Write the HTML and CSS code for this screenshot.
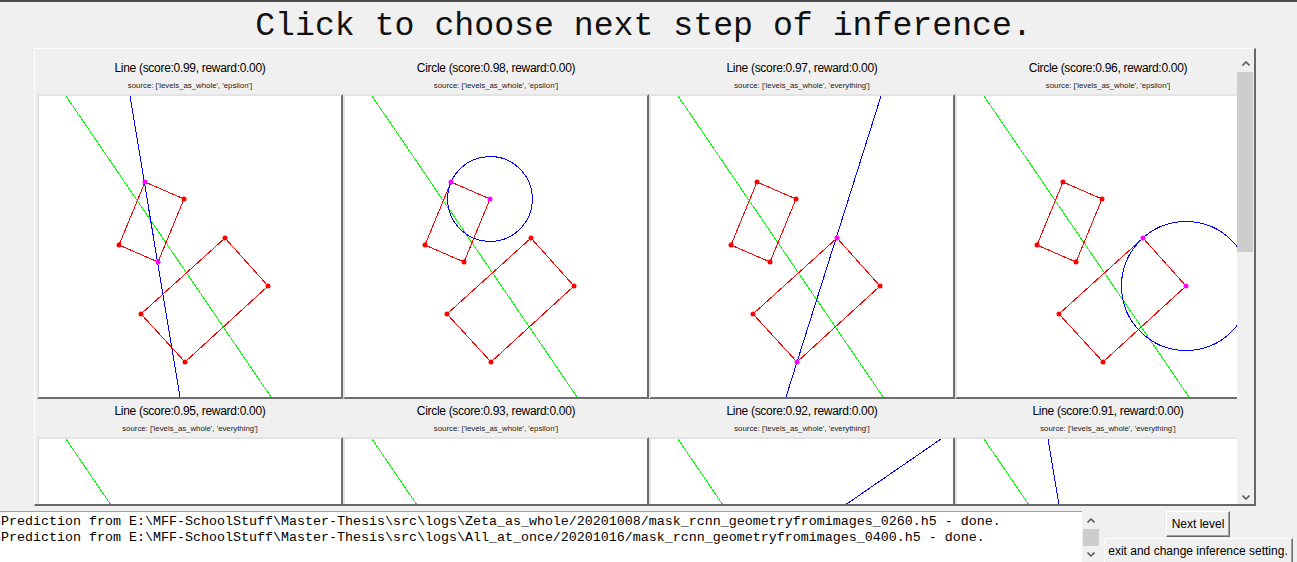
FILE: index.html
```html
<!DOCTYPE html>
<html>
<head>
<meta charset="utf-8">
<title>Inference</title>
<link rel="stylesheet" href="styles.css">
</head>
<body>
<div class="topbar"></div>
<h1 class="title">Click to choose next step of inference.</h1>
<div class="frame">
  <div class="viewport">
    <div class="grid">
      <div class="card">
        <div class="card-head"><div class="card-title">Line (score:0.99, reward:0.00)</div><div class="card-src">source: ['levels_as_whole', 'epsilon']</div></div>
        <div class="canvas"><svg viewBox="0 0 302 301">
          <line class="g" x1="27" y1="0" x2="232" y2="301"/>
          <polygon class="r" points="106,86 145,103 119,166 80,149"/>
          <polygon class="r" points="186,142 229,190 146,266 102,218"/>
          <line class="b" x1="91" y1="0" x2="141" y2="301"/>
          <circle class="dr" cx="145" cy="103" r="2.5"/><circle class="dr" cx="80" cy="149" r="2.5"/>
          <circle class="dr" cx="186" cy="142" r="2.5"/><circle class="dr" cx="229" cy="190" r="2.5"/><circle class="dr" cx="146" cy="266" r="2.5"/><circle class="dr" cx="102" cy="218" r="2.5"/>
          <circle class="dm" cx="106" cy="86" r="2.5"/><circle class="dm" cx="119" cy="166" r="2.5"/>
        </svg></div>
      </div>
      <div class="card">
        <div class="card-head"><div class="card-title">Circle (score:0.98, reward:0.00)</div><div class="card-src">source: ['levels_as_whole', 'epsilon']</div></div>
        <div class="canvas"><svg viewBox="0 0 302 301">
          <line class="g" x1="27" y1="0" x2="232" y2="301"/>
          <polygon class="r" points="106,86 145,103 119,166 80,149"/>
          <polygon class="r" points="186,142 229,190 146,266 102,218"/>
          <circle class="b" cx="145" cy="103" r="42.5"/>
          <circle class="dr" cx="119" cy="166" r="2.5"/><circle class="dr" cx="80" cy="149" r="2.5"/>
          <circle class="dr" cx="186" cy="142" r="2.5"/><circle class="dr" cx="229" cy="190" r="2.5"/><circle class="dr" cx="146" cy="266" r="2.5"/><circle class="dr" cx="102" cy="218" r="2.5"/>
          <circle class="dm" cx="106" cy="86" r="2.5"/><circle class="dm" cx="145" cy="103" r="2.5"/>
        </svg></div>
      </div>
      <div class="card">
        <div class="card-head"><div class="card-title">Line (score:0.97, reward:0.00)</div><div class="card-src">source: ['levels_as_whole', 'everything']</div></div>
        <div class="canvas"><svg viewBox="0 0 302 301">
          <line class="g" x1="27" y1="0" x2="232" y2="301"/>
          <polygon class="r" points="106,86 145,103 119,166 80,149"/>
          <polygon class="r" points="186,142 229,190 146,266 102,218"/>
          <line class="b" x1="230" y1="0" x2="135" y2="301"/>
          <circle class="dr" cx="106" cy="86" r="2.5"/><circle class="dr" cx="145" cy="103" r="2.5"/><circle class="dr" cx="119" cy="166" r="2.5"/><circle class="dr" cx="80" cy="149" r="2.5"/>
          <circle class="dr" cx="229" cy="190" r="2.5"/><circle class="dr" cx="102" cy="218" r="2.5"/>
          <circle class="dm" cx="186" cy="142" r="2.5"/><circle class="dm" cx="146" cy="266" r="2.5"/>
        </svg></div>
      </div>
      <div class="card">
        <div class="card-head"><div class="card-title">Circle (score:0.96, reward:0.00)</div><div class="card-src">source: ['levels_as_whole', 'epsilon']</div></div>
        <div class="canvas"><svg viewBox="0 0 302 301">
          <line class="g" x1="27" y1="0" x2="232" y2="301"/>
          <polygon class="r" points="106,86 145,103 119,166 80,149"/>
          <polygon class="r" points="186,142 229,190 146,266 102,218"/>
          <circle class="b" cx="229" cy="190" r="64.5"/>
          <circle class="dr" cx="106" cy="86" r="2.5"/><circle class="dr" cx="145" cy="103" r="2.5"/><circle class="dr" cx="119" cy="166" r="2.5"/><circle class="dr" cx="80" cy="149" r="2.5"/>
          <circle class="dr" cx="146" cy="266" r="2.5"/><circle class="dr" cx="102" cy="218" r="2.5"/>
          <circle class="dm" cx="186" cy="142" r="2.5"/><circle class="dm" cx="229" cy="190" r="2.5"/>
        </svg></div>
      </div>
      <div class="card">
        <div class="card-head"><div class="card-title">Line (score:0.95, reward:0.00)</div><div class="card-src">source: ['levels_as_whole', 'everything']</div></div>
        <div class="canvas"><svg viewBox="0 0 302 301">
          <line class="g" x1="27" y1="0" x2="232" y2="301"/>
          <polygon class="r" points="106,86 145,103 119,166 80,149"/>
          <polygon class="r" points="186,142 229,190 146,266 102,218"/>
        </svg></div>
      </div>
      <div class="card">
        <div class="card-head"><div class="card-title">Circle (score:0.93, reward:0.00)</div><div class="card-src">source: ['levels_as_whole', 'epsilon']</div></div>
        <div class="canvas"><svg viewBox="0 0 302 301">
          <line class="g" x1="27" y1="0" x2="232" y2="301"/>
          <polygon class="r" points="106,86 145,103 119,166 80,149"/>
          <polygon class="r" points="186,142 229,190 146,266 102,218"/>
        </svg></div>
      </div>
      <div class="card">
        <div class="card-head"><div class="card-title">Line (score:0.92, reward:0.00)</div><div class="card-src">source: ['levels_as_whole', 'everything']</div></div>
        <div class="canvas"><svg viewBox="0 0 302 301">
          <line class="g" x1="27" y1="0" x2="232" y2="301"/>
          <polygon class="r" points="106,86 145,103 119,166 80,149"/>
          <polygon class="r" points="186,142 229,190 146,266 102,218"/>
          <line class="b" x1="290" y1="0" x2="-147" y2="301"/>
        </svg></div>
      </div>
      <div class="card">
        <div class="card-head"><div class="card-title">Line (score:0.91, reward:0.00)</div><div class="card-src">source: ['levels_as_whole', 'everything']</div></div>
        <div class="canvas"><svg viewBox="0 0 302 301">
          <line class="g" x1="27" y1="0" x2="232" y2="301"/>
          <polygon class="r" points="106,86 145,103 119,166 80,149"/>
          <polygon class="r" points="186,142 229,190 146,266 102,218"/>
          <line class="b" x1="91" y1="0" x2="141" y2="301"/>
        </svg></div>
      </div>
    </div>
  </div>
  <div class="vscroll">
    <div class="sb-btn"><svg class="chev" viewBox="0 0 8 5"><polyline points="0.5,4.5 4,1 7.5,4.5"/></svg></div>
    <div class="sb-thumb"></div>
    <div class="sb-track"></div>
    <div class="sb-btn sb-down"><svg class="chev" viewBox="0 0 8 5"><polyline points="0.5,0.5 4,4 7.5,0.5"/></svg></div>
  </div>
</div>
<div class="bottom">
  <div class="log">Prediction from E:\MFF-SchoolStuff\Master-Thesis\src\logs\Zeta_as_whole/20201008/mask_rcnn_geometryfromimages_0260.h5 - done.
Prediction from E:\MFF-SchoolStuff\Master-Thesis\src\logs\All_at_once/20201016/mask_rcnn_geometryfromimages_0400.h5 - done.</div>
  <div class="logscroll">
    <div class="sb-btn"><svg class="chev" viewBox="0 0 8 5"><polyline points="0.5,4.5 4,1 7.5,4.5"/></svg></div>
    <div class="sb-thumb small"></div>
    <div class="sb-btn"><svg class="chev" viewBox="0 0 8 5"><polyline points="0.5,0.5 4,4 7.5,0.5"/></svg></div>
  </div>
  <div class="actions">
    <button class="btn btn-next">Next level</button>
    <button class="btn btn-exit">exit and change inference setting.</button>
  </div>
</div>
</body>
</html>
```
FILE: styles.css
```css
html, body {
  margin: 0;
  padding: 0;
}
body {
  background: #f0f0f0;
  width: 1297px;
  height: 562px;
  overflow: hidden;
  font-family: "Liberation Sans", Arial, sans-serif;
  color: #000;
}
.topbar {
  height: 2px;
  background: #4b4b4b;
}
.title {
  margin: 0;
  padding: 4px 10px 0 0;
  height: 40px;
  font: normal 33.2px/40px "Liberation Mono", "Courier New", monospace;
  text-align: center;
  white-space: nowrap;
  color: #111;
}
.frame {
  margin: 2px 0 0 34px;
  width: 1222px;
  height: 458px;
  box-sizing: border-box;
  border-style: solid;
  border-width: 1px 2px 2px 1px;
  border-color: #ffffff #696969 #696969 #ffffff;
  padding: 1px 0 0 1px;
  display: flex;
}
.viewport {
  flex: 1;
  min-width: 0;
  overflow: hidden;
  padding: 6px 0 0 1px;
}
.grid {
  display: grid;
  grid-template-columns: repeat(4, 306px);
  width: max-content;
}
.card {
  width: 306px;
}
.card-head {
  height: 38px;
  box-sizing: border-box;
  padding-top: 5px;
  text-align: center;
  white-space: nowrap;
}
.card-title {
  font-size: 12px;
  line-height: 14px;
  letter-spacing: -0.3px;
}
.card-src {
  margin-top: 6px;
  font-size: 7.8px;
  line-height: 10px;
  color: #222;
}
.canvas {
  height: 305px;
  box-sizing: border-box;
  border-style: solid;
  border-width: 2px;
  border-color: #e3e3e3 #6d6d6d #6d6d6d #e3e3e3;
  background: #fff;
  overflow: hidden;
}
.canvas svg {
  display: block;
  width: 302px;
  height: 301px;
}
.g { stroke: #00ff00; stroke-width: 1; shape-rendering: crispEdges; }
.r { fill: none; stroke: #ff0000; stroke-width: 1; shape-rendering: crispEdges; }
.b { fill: none; stroke: #0000ff; stroke-width: 1; shape-rendering: crispEdges; }
.dr { fill: #ff0000; }
.dm { fill: #ff00ff; }

.vscroll {
  width: 17px;
  display: flex;
  flex-direction: column;
  padding-top: 5px;
  box-sizing: border-box;
}
.sb-btn {
  height: 17px;
  flex: none;
  display: flex;
  align-items: center;
  justify-content: center;
}
.sb-down {
  padding-top: 3px;
  box-sizing: border-box;
}
.chev {
  width: 8px;
  height: 5px;
  display: block;
}
.chev polyline {
  fill: none;
  stroke: #606060;
  stroke-width: 1.6;
}
.sb-thumb {
  height: 180px;
  flex: none;
  background: #cdcdcd;
  margin-right: 1px;
}
.sb-thumb.small {
  height: 17px;
  margin-right: 0;
}
.sb-track {
  flex: 1;
}

.bottom {
  display: flex;
  align-items: flex-start;
  margin-top: 5px;
}
.log {
  width: 1082px;
  height: 52px;
  flex: none;
  box-sizing: border-box;
  background: #fff;
  border-top: 1px solid #a0a0a0;
  padding: 2px 0 0 1px;
  font: 13.33px/16px "Liberation Mono", "Courier New", monospace;
  white-space: pre;
  overflow: hidden;
  color: #000;
}
.logscroll {
  width: 16px;
  margin: 1px 0 0 1px;
  display: flex;
  flex-direction: column;
}
.actions {
  flex: 1;
  display: flex;
  flex-direction: column;
  align-items: center;
}
.btn {
  font: 12px/1 "Liberation Sans", Arial, sans-serif;
  color: #000;
  background: #f0f0f0;
  border-style: solid;
  border-width: 1px;
  border-color: #ffffff #696969 #696969 #ffffff;
  box-shadow: inset -1px -1px 0 #a0a0a0;
  height: 26px;
  padding: 0;
  margin: 0;
  box-sizing: border-box;
}
.btn-next {
  width: 64px;
}
.btn-exit {
  width: 189px;
  margin-top: 1px;
}
```
